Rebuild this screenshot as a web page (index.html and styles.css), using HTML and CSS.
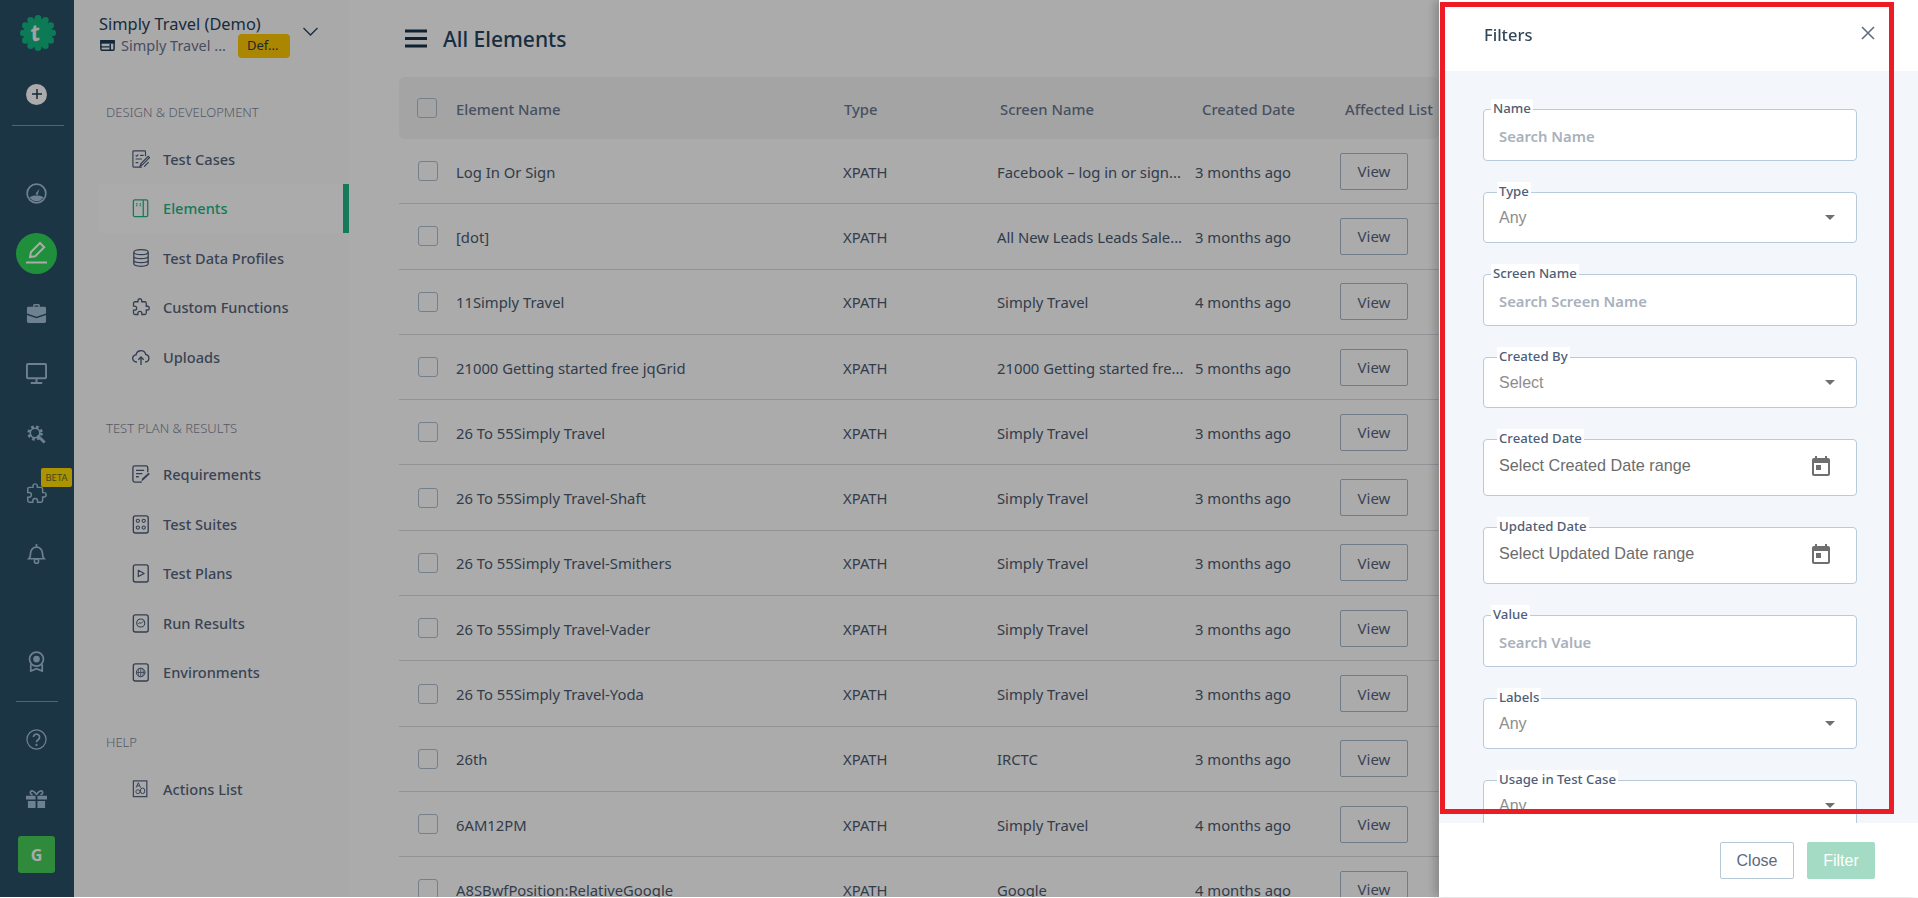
FILE: index.html
```html
<!DOCTYPE html>
<html lang="en">
<head>
<meta charset="utf-8">
<title>All Elements</title>
<link rel="stylesheet" href="styles.css">
</head>
<body>
<div class="app">
  <aside class="rail">
    <div class="rail-logo">
      <svg width="38" height="38" viewBox="0 0 38 38"><g fill="#11b67f"><circle cx="19" cy="19" r="14.5"/><circle cx="19" cy="4.300" r="3.300"/><circle cx="26.400" cy="6.300" r="3.300"/><circle cx="31.700" cy="11.600" r="3.300"/><circle cx="33.700" cy="19" r="3.300"/><circle cx="31.700" cy="26.400" r="3.300"/><circle cx="26.400" cy="31.700" r="3.300"/><circle cx="19" cy="33.700" r="3.300"/><circle cx="11.600" cy="31.700" r="3.300"/><circle cx="6.300" cy="26.400" r="3.300"/><circle cx="4.300" cy="19" r="3.300"/><circle cx="6.300" cy="11.600" r="3.300"/><circle cx="11.600" cy="6.300" r="3.300"/></g></svg>
      <span class="logo-t">t</span>
    </div>
    <div class="rail-plus"><span class="plus-disc"><svg width="12" height="12" viewBox="0 0 12 12"><path d="M6 1v10M1 6h10" stroke="#1f3d55" stroke-width="1.500" fill="none"/></svg></span></div>
    <div class="rail-rule"></div>
    <div class="rail-group">
      <div class="rail-btn"><svg class="ri" viewBox="0 0 22 22"><circle cx="11" cy="11" r="9.800" fill="none" stroke="currentColor" stroke-width="1.800"/><path d="M3.500 15A9 9 0 0 0 18.500 15C16 13.200 13.500 13 11 13S6 13.200 3.500 15z" fill="currentColor"/><path d="M9.800 11.500L14 6l-1.800 6.500z" fill="currentColor"/></svg></div>
      <div class="rail-btn"><span class="active-disc"><svg width="22" height="24" viewBox="0 0 22 24"><path d="M4 16l1-5 9-9 4.200 4.200-9 9z" fill="none" stroke="#fff" stroke-width="2"/><rect x="0" y="20.500" width="21" height="2" fill="#fff"/></svg></span></div>
      <div class="rail-btn"><svg class="ri" viewBox="0 0 22 22"><path d="M7.500 4V2.500A1.500 1.500 0 0 1 9 1h4a1.500 1.500 0 0 1 1.500 1.500V4h5A1.500 1.500 0 0 1 21 5.500V11l-10 3.500L1 11V5.500A1.500 1.500 0 0 1 2.500 4zM9 4h4V2.500H9z" fill="currentColor"/><path d="M1 12.500l10 3.500 10-3.500v7a1.500 1.500 0 0 1-1.500 1.500h-17A1.500 1.500 0 0 1 1 19.500z" fill="currentColor"/></svg></div>
      <div class="rail-btn"><svg class="ri" viewBox="0 0 22 22"><rect x="1" y="1" width="20" height="15" rx="1" fill="none" stroke="currentColor" stroke-width="2"/><path d="M11 16v4M5 21h12" stroke="currentColor" stroke-width="2" fill="none"/></svg></div>
      <div class="rail-btn"><svg class="ri" viewBox="0 0 22 22"><circle cx="9.500" cy="10.500" r="6.300" fill="none" stroke="currentColor" stroke-width="3.600" stroke-dasharray="2.600 2.400"/><circle cx="9.500" cy="10.500" r="5" fill="none" stroke="currentColor" stroke-width="1.600"/><path d="M12 13l7.500 7.500" stroke="currentColor" stroke-width="3" fill="none"/></svg></div>
      <div class="rail-btn"><svg class="ri" viewBox="0 0 24 24"><path d="M20.500 11H19V7c0-1.100-.9-2-2-2h-4V3.500C13 2.120 11.880 1 10.500 1S8 2.120 8 3.500V5H4c-1.100 0-1.990.9-1.990 2v3.800H3.500c1.490 0 2.700 1.210 2.700 2.700s-1.210 2.700-2.700 2.700H2V20c0 1.100.9 2 2 2h3.800v-1.500c0-1.490 1.210-2.700 2.700-2.700 1.490 0 2.700 1.210 2.700 2.700V22H17c1.100 0 2-.9 2-2v-4h1.500c1.380 0 2.500-1.120 2.500-2.500S21.880 11 20.500 11z" fill="none" stroke="currentColor" stroke-width="1.700"/></svg><span class="beta">BETA</span></div>
      <div class="rail-btn"><svg class="ri" viewBox="0 0 22 22"><path d="M3 16.500c1.500-1.500 1.800-3 1.800-6a6.200 6.200 0 0 1 12.400 0c0 3 .3 4.500 1.800 6z" fill="none" stroke="currentColor" stroke-width="1.800"/><path d="M11 1v3" stroke="currentColor" stroke-width="1.800"/><circle cx="11" cy="19" r="2.200" fill="none" stroke="currentColor" stroke-width="1.600"/></svg></div>
    </div>
    <div class="rail-bottom">
      <div class="rail-btn"><svg class="ri" viewBox="0 0 22 22"><circle cx="11" cy="8.500" r="7.300" fill="none" stroke="currentColor" stroke-width="1.800"/><circle cx="11" cy="8.500" r="3.500" fill="currentColor"/><path d="M5 14v7l6-2.500 6 2.500v-7" fill="none" stroke="currentColor" stroke-width="1.800"/></svg></div>
      <div class="rail-rule short"></div>
      <div class="rail-btn"><svg class="ri" viewBox="0 0 22 22"><circle cx="11" cy="11" r="10" fill="none" stroke="currentColor" stroke-width="1.300"/><path d="M7.800 8.500a3.200 3.200 0 1 1 4.900 2.700c-1.200.8-1.700 1.300-1.700 2.800" fill="none" stroke="currentColor" stroke-width="1.800"/><circle cx="11" cy="16.700" r="1.200" fill="currentColor"/></svg></div>
      <div class="rail-btn"><svg class="ri" viewBox="0 0 22 20"><path d="M0 6h10v4H0zM12 6h10v4H12zM2 11.500h8V19H2zM12 11.500h8V19h-8z" fill="currentColor"/><path d="M11 5C9 1 6 .5 5 1.500S4.500 5 7 5M11 5c2-4 5-4.500 6-3.500S17.500 5 15 5" fill="none" stroke="currentColor" stroke-width="1.700"/></svg></div>
      <div class="avatar">G</div>
    </div>
  </aside>

  <nav class="nav">
    <div class="workspace">
      <div class="ws-text">
        <div class="ws-name">Simply Travel (Demo)</div>
        <div class="ws-sub">
          <svg class="ws-icon" viewBox="0 0 16 12"><rect x=".8" y=".8" width="14.400" height="10.400" rx="1" fill="none" stroke="currentColor" stroke-width="1.600"/><rect x="0" y="0" width="16" height="4" fill="currentColor"/><path d="M0 7.500h10M11 4v8" stroke="currentColor" stroke-width="1.600"/></svg>
          <span class="ws-sub-text">Simply Travel ...</span>
          <span class="ws-badge">Def...</span>
        </div>
      </div>
      <svg class="ws-chev" viewBox="0 0 16 9"><path d="M1 1l7 7 7-7" fill="none" stroke="currentColor" stroke-width="1.300"/></svg>
    </div>

    <div class="nav-label first">DESIGN &amp; DEVELOPMENT</div>
    <a class="nav-item">
      <svg class="ni" viewBox="0 0 20 20"><path d="M15 7V2a1 1 0 0 0-1-1H2a1 1 0 0 0-1 1v16a1 1 0 0 0 1 1h9" fill="none" stroke="currentColor" stroke-width="1.300"/><path d="M4 6l1 1 2-2M9 6h4M4 10h7M4 14h3" fill="none" stroke="currentColor" stroke-width="1.200"/><path d="M9 18l1-3 8-8 1.500 1.500-8 8zM13.500 18.500l5-5" fill="none" stroke="currentColor" stroke-width="1.400"/></svg>
      <span>Test Cases</span>
    </a>
    <a class="nav-item active">
      <svg class="ni" viewBox="0 0 20 20"><rect x="1.500" y="1" width="16" height="18.500" rx="1.500" fill="none" stroke="currentColor" stroke-width="1.400"/><path d="M12.500 1v18.500" stroke="currentColor" stroke-width="1.400"/><path d="M4.500 5.500h1.600M8.500 5.500h1.600M4.500 7.500h1.600M8.500 7.500h1.600" stroke="currentColor" stroke-width="1.300"/></svg>
      <span>Elements</span>
    </a>
    <a class="nav-item">
      <svg class="ni" viewBox="0 0 20 20"><ellipse cx="10" cy="3.500" rx="8" ry="2.700" fill="none" stroke="currentColor" stroke-width="1.400"/><path d="M2 3.500v13c0 1.500 3.600 2.700 8 2.700s8-1.200 8-2.700v-13M2 8c0 1.500 3.600 2.700 8 2.700s8-1.200 8-2.700M2 12.500c0 1.500 3.600 2.700 8 2.700s8-1.200 8-2.700" fill="none" stroke="currentColor" stroke-width="1.400"/></svg>
      <span>Test Data Profiles</span>
    </a>
    <a class="nav-item">
      <svg class="ni" viewBox="0 0 24 24"><path d="M20.500 11H19V7c0-1.100-.9-2-2-2h-4V3.500C13 2.120 11.880 1 10.500 1S8 2.120 8 3.500V5H4c-1.100 0-1.990.9-1.990 2v3.800H3.500c1.490 0 2.700 1.210 2.700 2.700s-1.210 2.700-2.700 2.700H2V20c0 1.100.9 2 2 2h3.800v-1.500c0-1.490 1.210-2.700 2.700-2.700 1.490 0 2.700 1.210 2.700 2.700V22H17c1.100 0 2-.9 2-2v-4h1.500c1.380 0 2.500-1.120 2.500-2.500S21.880 11 20.500 11z" fill="none" stroke="currentColor" stroke-width="1.700"/></svg>
      <span>Custom Functions</span>
    </a>
    <a class="nav-item">
      <svg class="ni" viewBox="0 0 20 20"><path d="M5.500 15.500H5A4 4 0 0 1 4.500 7.500a5.500 5.500 0 0 1 10.700-.5A4.300 4.300 0 0 1 15 15.500h-.5" fill="none" stroke="currentColor" stroke-width="1.500"/><path d="M10 19v-8.500M7 13l3-3 3 3" fill="none" stroke="currentColor" stroke-width="1.500"/></svg>
      <span>Uploads</span>
    </a>

    <div class="nav-label second">TEST PLAN &amp; RESULTS</div>
    <a class="nav-item">
      <svg class="ni" viewBox="0 0 20 20"><path d="M17.500 8V3a2 2 0 0 0-2-2H3a2 2 0 0 0-2 2v14a2 2 0 0 0 2 2h8" fill="none" stroke="currentColor" stroke-width="1.500"/><path d="M4.500 6h9M4.500 9.500h7M4.500 13h3" stroke="currentColor" stroke-width="1.500"/><path d="M10.500 18l.8-3 7-6.500 1.500 1.500-7 6.700z" fill="currentColor"/></svg>
      <span>Requirements</span>
    </a>
    <a class="nav-item">
      <svg class="ni" viewBox="0 0 20 20"><rect x="1.500" y="1" width="16.500" height="19" rx="2.200" fill="none" stroke="currentColor" stroke-width="1.500"/><circle cx="6.500" cy="6.500" r="1.800" fill="none" stroke="currentColor" stroke-width="1.200"/><circle cx="13" cy="6.500" r="1.800" fill="none" stroke="currentColor" stroke-width="1.200"/><circle cx="6.500" cy="14" r="1.800" fill="none" stroke="currentColor" stroke-width="1.200"/><circle cx="13" cy="14" r="1.800" fill="none" stroke="currentColor" stroke-width="1.200"/></svg>
      <span>Test Suites</span>
    </a>
    <a class="nav-item">
      <svg class="ni" viewBox="0 0 20 20"><rect x="1.500" y="1" width="16.500" height="19" rx="2.200" fill="none" stroke="currentColor" stroke-width="1.500"/><path d="M7 7l6.500 3.500L7 14z" fill="none" stroke="currentColor" stroke-width="1.300" stroke-linejoin="round"/></svg>
      <span>Test Plans</span>
    </a>
    <a class="nav-item">
      <svg class="ni" viewBox="0 0 20 20"><rect x="1.500" y="1" width="16.500" height="19" rx="2.200" fill="none" stroke="currentColor" stroke-width="1.500"/><circle cx="9.700" cy="10" r="4.500" fill="none" stroke="currentColor" stroke-width="1.200"/><path d="M6.800 11l2-1.500 1.400 1 2.300-2.400" fill="none" stroke="currentColor" stroke-width="1.100"/></svg>
      <span>Run Results</span>
    </a>
    <a class="nav-item">
      <svg class="ni" viewBox="0 0 20 20"><rect x="1.500" y="1" width="16.500" height="19" rx="2.200" fill="none" stroke="currentColor" stroke-width="1.500"/><circle cx="9.700" cy="10.500" r="4.800" fill="none" stroke="currentColor" stroke-width="1.100"/><path d="M5 10.500h9.500M9.700 5.700v9.600M7.800 6.200c-1.300 2.500-1.300 6 0 8.500M11.600 6.200c1.300 2.500 1.300 6 0 8.500" fill="none" stroke="currentColor" stroke-width=".9"/></svg>
      <span>Environments</span>
    </a>

    <div class="nav-label help">HELP</div>
    <a class="nav-item">
      <svg class="ni" viewBox="0 0 20 20"><rect x="1.500" y="1" width="15" height="17.500" fill="none" stroke="currentColor" stroke-width="1.300"/><path d="M4.500 8.500L7 3l2.500 5.500M5.500 6.500h3" fill="none" stroke="currentColor" stroke-width="1"/><circle cx="6.500" cy="13" r="2.200" fill="none" stroke="currentColor" stroke-width="1"/><rect x="9.500" y="9" width="4.500" height="6" rx="2" fill="none" stroke="currentColor" stroke-width="1.100"/></svg>
      <span>Actions List</span>
    </a>
  </nav>

  <main class="main">
    <header class="page-head">
      <svg class="burger" viewBox="0 0 22 19"><path d="M0 2h22M0 9.500h22M0 17h22" stroke="currentColor" stroke-width="3.200" fill="none"/></svg>
      <h1 class="page-title">All Elements</h1>
    </header>
    <div class="table">
      <div class="thead">
        <span class="cb"></span><span>Element Name</span><span>Type</span><span>Screen Name</span><span>Created Date</span><span>Affected List</span>
      </div>
      <div class="row"><span class="cb"></span><span>Log In Or Sign</span><span>XPATH</span><span>Facebook – log in or sign...</span><span>3 months ago</span><button class="view">View</button></div>
      <div class="row"><span class="cb"></span><span>[dot]</span><span>XPATH</span><span>All New Leads Leads Sale...</span><span>3 months ago</span><button class="view">View</button></div>
      <div class="row"><span class="cb"></span><span>11Simply Travel</span><span>XPATH</span><span>Simply Travel</span><span>4 months ago</span><button class="view">View</button></div>
      <div class="row"><span class="cb"></span><span>21000 Getting started free jqGrid</span><span>XPATH</span><span>21000 Getting started fre...</span><span>5 months ago</span><button class="view">View</button></div>
      <div class="row"><span class="cb"></span><span>26 To 55Simply Travel</span><span>XPATH</span><span>Simply Travel</span><span>3 months ago</span><button class="view">View</button></div>
      <div class="row"><span class="cb"></span><span>26 To 55Simply Travel-Shaft</span><span>XPATH</span><span>Simply Travel</span><span>3 months ago</span><button class="view">View</button></div>
      <div class="row"><span class="cb"></span><span>26 To 55Simply Travel-Smithers</span><span>XPATH</span><span>Simply Travel</span><span>3 months ago</span><button class="view">View</button></div>
      <div class="row"><span class="cb"></span><span>26 To 55Simply Travel-Vader</span><span>XPATH</span><span>Simply Travel</span><span>3 months ago</span><button class="view">View</button></div>
      <div class="row"><span class="cb"></span><span>26 To 55Simply Travel-Yoda</span><span>XPATH</span><span>Simply Travel</span><span>3 months ago</span><button class="view">View</button></div>
      <div class="row"><span class="cb"></span><span>26th</span><span>XPATH</span><span>IRCTC</span><span>3 months ago</span><button class="view">View</button></div>
      <div class="row"><span class="cb"></span><span>6AM12PM</span><span>XPATH</span><span>Simply Travel</span><span>4 months ago</span><button class="view">View</button></div>
      <div class="row"><span class="cb"></span><span>A8SBwfPosition:RelativeGoogle</span><span>XPATH</span><span>Google</span><span>4 months ago</span><button class="view">View</button></div>
    </div>
  </main>
</div>

<div class="scrim"></div>

<section class="panel">
  <header class="panel-head">
    <h2 class="panel-title">Filters</h2>
    <svg class="panel-x" viewBox="0 0 14 14"><path d="M1 1l12 12M13 1L1 13" stroke="currentColor" stroke-width="1.600" fill="none"/></svg>
  </header>
  <div class="panel-body">
    <div class="field tall52"><label class="flabel near">Name</label><span class="ph">Search Name</span></div>
    <div class="field tall51"><label class="flabel">Type</label><span class="val">Any</span><i class="caret"></i></div>
    <div class="field tall52"><label class="flabel near">Screen Name</label><span class="ph">Search Screen Name</span></div>
    <div class="field tall51"><label class="flabel">Created By</label><span class="val">Select</span><i class="caret"></i></div>
    <div class="field tall57"><label class="flabel">Created Date</label><span class="date">Select Created Date range</span><svg class="cal" viewBox="3 2 18 20"><path d="M19 4h-1V2h-2v2H8V2H6v2H5c-1.110 0-1.990.9-1.990 2L3 20c0 1.100.89 2 2 2h14c1.100 0 2-.9 2-2V6c0-1.100-.9-2-2-2zm0 16H5V9h14v11zM7 11h5v5H7z" fill="currentColor"/></svg></div>
    <div class="field tall57"><label class="flabel">Updated Date</label><span class="date">Select Updated Date range</span><svg class="cal" viewBox="3 2 18 20"><path d="M19 4h-1V2h-2v2H8V2H6v2H5c-1.110 0-1.990.9-1.990 2L3 20c0 1.100.89 2 2 2h14c1.100 0 2-.9 2-2V6c0-1.100-.9-2-2-2zm0 16H5V9h14v11zM7 11h5v5H7z" fill="currentColor"/></svg></div>
    <div class="field tall52"><label class="flabel near">Value</label><span class="ph">Search Value</span></div>
    <div class="field tall51"><label class="flabel">Labels</label><span class="val">Any</span><i class="caret"></i></div>
    <div class="field tall51"><label class="flabel">Usage in Test Case</label><span class="val">Any</span><i class="caret"></i></div>
  </div>
  <footer class="panel-foot">
    <button class="btn-close">Close</button>
    <button class="btn-filter">Filter</button>
  </footer>
</section>

<div class="annotation"></div>
</body>
</html>
```
FILE: styles.css
```css
* { box-sizing: border-box; }
html { background: #fff; }
body {
  margin: 0;
  height: 897px;
  overflow: hidden;
  font-family: "Noto Sans", "Open Sans", sans-serif;
  font-size: 14px;
  color: #57657d;
}
.app { display: flex; height: 897px; background: #fff; }

/* icon rail */
.rail { width: 74px; flex: none; background: #2a4f67; display: flex; flex-direction: column; color: #a4c0d8; }
.rail-logo { height: 66px; padding: 14px 0 0 19px; position: relative; }
.logo-t { position: absolute; left: 30px; top: 16px; font-weight: 700; font-style: italic; font-size: 23px; line-height: 32px; color: #f0f0f0; transform: rotate(-12deg); }
.rail-plus { height: 56px; display: flex; align-items: center; padding-left: 26px; }
.plus-disc { width: 21px; height: 21px; border-radius: 50%; background: #fff; display: flex; align-items: center; justify-content: center; }
.rail-rule { height: 1px; background: #7d97aa; margin: 3px 10px 0 12px; }
.rail-rule.short { margin: 10px 16px 7px 16px; }
.rail-group { margin-top: 37px; }
.rail-btn { height: 60px; position: relative; display: flex; align-items: center; justify-content: center; padding-right: 1px; }
.ri { width: 21px; height: 21px; }
.active-disc { width: 41px; height: 41px; border-radius: 50%; background: #2fd558; display: flex; align-items: center; justify-content: center; }
.beta {
  position: absolute; left: 41px; top: 5px; width: 31px; height: 19px; border-radius: 2px;
  background: #ffdd00; color: #6b6b2a; font-size: 9.500px; display: flex; align-items: center; justify-content: center;
}
.rail-bottom { margin-top: 48px; }
.avatar {
  width: 37px; height: 37px; margin: 7px 0 0 18px; border-radius: 3px; background: #46cf58;
  color: #fff; font-weight: 700; font-size: 16px; display: flex; align-items: center; justify-content: center;
}

/* nav */
.nav { width: 275px; flex: none; background: #fdfdfd; padding: 0 0 0 25px; }
.workspace { height: 68px; display: flex; align-items: flex-start; }
.ws-text { width: 203px; padding-top: 12px; }
.ws-name { font-size: 16.400px; line-height: 24px; color: #28405a; white-space: nowrap; }
.ws-sub { display: flex; align-items: center; height: 24px; margin-left: 1px; margin-top: -3px; }
.ws-icon { width: 15px; height: 11px; color: #1f3d5a; flex: none; }
.ws-sub-text { margin-left: 6px; width: 111px; font-size: 14.500px; color: #6b7590; white-space: nowrap; }
.ws-badge { width: 52px; height: 24px; border-radius: 4px; margin-left: 6px; margin-top: 2px; background: #ffc800; color: #2f3a50; font-size: 13px; padding-left: 9px; line-height: 22px; flex: none; }
.ws-chev { width: 17px; height: 9px; margin-top: 27px; color: #28405a; flex: none; }
.nav-label { font-size: 13px; line-height: 18px; color: #7f8799; padding-left: 7px; font-weight: 300; }
.nav-label.first { margin-top: 35px; margin-bottom: 13px; }
.nav-label.second { margin-top: 37px; margin-bottom: 13px; }
.nav-label.help { margin-top: 36px; margin-bottom: 13px; }
.nav-item { display: flex; align-items: center; height: 49.500px; width: 250px; padding-left: 33px; font-size: 14.600px; font-weight: 500; color: #57657d; white-space: nowrap; }
.nav-item span { margin-left: 13px; }
.ni { width: 18px; height: 20px; flex: none; color: #4d5d7c; }
.nav-item.active { background: #fff; color: #1eb685; border-right: 6px solid #1eb685; }
.nav-item.active .ni { color: #1eb685; }

/* main */
.main { flex: 1; min-width: 0; background: #fff; padding: 0 0 0 50px; overflow: hidden; }
.page-head { height: 77px; display: flex; align-items: center; }
.burger { width: 22px; height: 19px; margin-left: 6px; color: #17344a; flex: none; }
.page-title { margin: 0 0 0 16px; font-size: 21px; font-weight: 500; color: #264460; }
.table { width: 1040px; }
.thead, .row { display: grid; align-items: center; font-size: 14.800px; white-space: nowrap; }
.thead {
  height: 62px; background: #f5f5f5; border-radius: 6px; padding-left: 18px;
  grid-template-columns: 39px 388px 156px 202px 143px 1fr;
  font-weight: 500; color: #6b7890;
}
.row {
  height: 65.300px; padding-left: 19px; border-bottom: 1px solid #d8dce2;
  grid-template-columns: 38px 387px 154px 198px 145px 1fr;
  color: #4b5a70;
}
.cb { width: 20px; height: 20px; border: 1px solid #aebfd0; border-radius: 3px; background: transparent; display: block; }
.row > span:not(.cb) { margin-top: 1px; }
.thead > span:not(.cb) { margin-top: 1px; }
.view {
  width: 68px; height: 37px; border: 1px solid #a8bacb; border-radius: 2px; background: #fff;
  font: 15px "Noto Sans", sans-serif; color: #57657d; padding: 0;
}

/* scrim + panel */
.scrim { position: fixed; left: 0; top: 0; width: 100%; height: 897px; background: rgba(0, 0, 0, .33); }
.panel {
  position: fixed; right: 0; top: 0; width: 479px; height: 897px; background: #fff;
  display: flex; flex-direction: column; box-shadow: -4px 0 9px rgba(0, 0, 0, .22);
}
.panel-head { height: 71px; flex: none; display: flex; align-items: center; justify-content: space-between; padding: 0 43px 3px 45px; }
.panel-title { margin: 0; font-size: 16.500px; font-weight: 500; color: #33475b; }
.panel-x { width: 14px; height: 14px; margin-bottom: 2px; color: #5f6f80; }
.panel-body { flex: 1; min-height: 0; overflow: hidden; background: #f3f6fa; padding: 38px 61px 0 44px; display: flex; flex-direction: column; gap: 31px; }
.field { position: relative; flex: none; background: #fff; border: 1px solid #b9cbdb; border-radius: 4px; padding-left: 15px; display: flex; align-items: center; }
.tall51 { height: 51px; }
.tall52 { height: 52px; }
.tall57 { height: 57px; padding-bottom: 4px; }
.flabel { position: absolute; left: 13px; top: -11px; height: 18px; line-height: 18px; padding: 0 2px; font-size: 13.200px; font-weight: 500; color: #4f5e76; background: #fff; }
.flabel.near { left: 7px; }
.ph { font-size: 14.800px; font-weight: 600; color: #a9b1bd; padding-top: 1px; }
.val { font-family: "Liberation Sans", Arial, sans-serif; font-size: 16px; color: #8d8d8d; }
.date { font-family: "Liberation Sans", Arial, sans-serif; font-size: 16.200px; color: #6c6c6c; }
.caret { position: absolute; right: 21px; top: 22px; width: 0; height: 0; border-left: 5px solid transparent; border-right: 5px solid transparent; border-top: 5px solid #6f6f6f; }
.cal { position: absolute; right: 26px; top: 16px; width: 18px; height: 20px; color: #6f6f6f; }
.panel-foot { height: 74px; flex: none; display: flex; justify-content: flex-end; gap: 13px; padding: 19px 43px 0 0; background: #fff; }
.btn-close, .btn-filter { height: 37px; font: 16px "Liberation Sans", Arial, sans-serif; border-radius: 2px; padding: 0; }
.btn-close { width: 74px; background: #fff; border: 1px solid #b5c8d8; color: #5c6b7d; }
.btn-filter { width: 68px; background: #a3dbc4; border: 0; color: #fff; }
.annotation { position: fixed; left: 1440px; top: 2px; width: 454px; height: 812px; border: 5px solid #ed1c24; }
```
